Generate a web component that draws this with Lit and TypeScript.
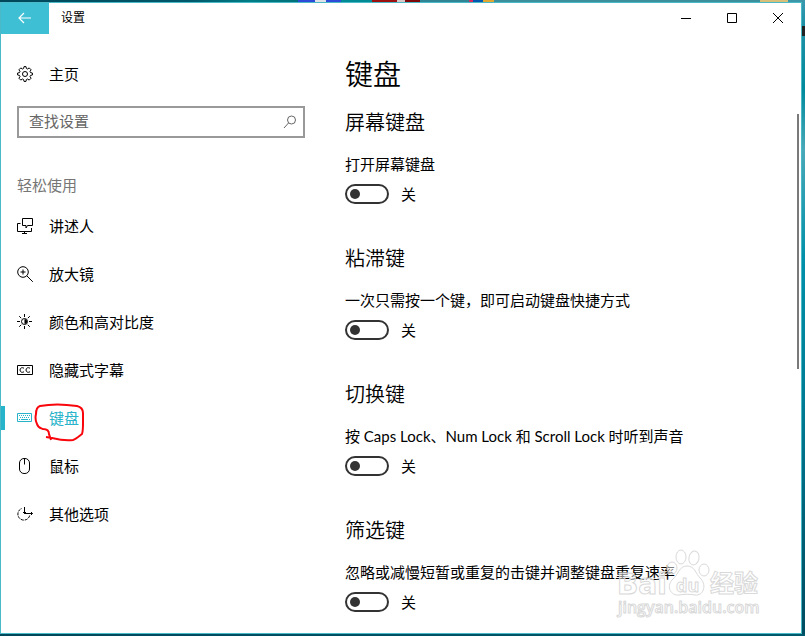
import { LitElement, html, css, svg } from "lit";
import { customElement, property, state } from "lit/decorators.js";
import { classMap } from "lit/directives/class-map.js";

const icons: Record<string, unknown> = {
  gear: svg`<path d="M7 .6h2l.4 1.9 1.2.5L12.200 1.900l1.900 1.900L13 5.400l.5 1.200 1.900.4v2l-1.900.4-.5 1.200 1.100 1.600-1.900 1.900L10.600 13l-1.200.5L9 15.400H7l-.4-1.900L5.400 13l-1.600 1.100-1.900-1.900L3 10.600l-.5-1.200L.6 9V7l1.900-.4L3 5.400 1.900 3.800l1.900-1.900L5.400 3l1.200-.5z"/><circle cx="8" cy="8" r="2.500"/>`,
  narrator: svg`<path d="M5.500 .5h10v7h-5l-1.500 2.500v-2.500H5.500z M3.500 5.500h-3v8h14v-3.500M7.500 13.500v2M5 15.500h5"/>`,
  magnifier: svg`<circle cx="6" cy="6" r="5.300"/><path d="M9.800 9.800l6 6M6 3.500v5M3.500 6h5"/>`,
  contrast: svg`<circle cx="7.500" cy="7.500" r="3"/><path d="M7.500 5a2.500 2.500 0 0 1 0 5z" fill="currentColor" stroke="none"/><path d="M7.500 0v3M7.500 12v3M0 7.500h3M12 7.500h3M2.200 2.200l2 2M10.800 10.800l2 2M2.200 12.800l2-2M10.800 4.200l2-2"/>`,
  captions: svg`<path d="M.5 3.500h15v9H.5z"/><path d="M7 6.200C5 5 3 6 3 8s2 3 4 1.800M13 6.200C11 5 9 6 9 8s2 3 4 1.800"/>`,
  keyboard: svg`<path d="M.5 3.500h14v8H.5z"/><path d="M2 5.500h11M3 7.500h10" stroke-dasharray="1 1"/><path d="M2 9.500h1M4 9.500h7M12 9.500h1"/>`,
  mouse: svg`<rect x="2.500" y=".5" width="10" height="15" rx="4.500"/><path d="M7.500 .5v6"/>`,
  other: svg`<path d="M12.700 9.500A6 6 0 1 1 5 2.400" stroke-dasharray="3 1"/><path d="M7.500 1v6.500H15.500M6 6l1.500 1.500L9 6M14 6l1.500 1.500L14 9"/>`,
};

@customElement("nav-icon")
export class NavIcon extends LitElement {
  @property() name = "";
  static styles = css`
    :host { display: block; flex: none; width: 16px; height: 16px; }
    svg { display: block; fill: none; stroke: currentColor; overflow: visible; }
  `;
  render() {
    return html`<svg width="16" height="16" viewBox="0 0 16 16" aria-hidden="true">${icons[this.name]}</svg>`;
  }
}

@customElement("setting-section")
export class SettingSection extends LitElement {
  @property() heading = "";
  @property() label = "";
  @state() on = false;
  static styles = css`
    :host { display: block; }
    h2 { margin: 0; font-size: 20px; line-height: 28px; font-weight: 350; }
    .label { display: block; margin-top: 17px; line-height: 22px; }
    .row { display: flex; align-items: center; gap: 12px; margin-top: 9px; height: 20px; }
    input {
      appearance: none; display: flex; align-items: center; box-sizing: border-box;
      width: 44px; height: 20px; margin: 0; padding: 0 3px;
      border: 2px solid #333; border-radius: 10px;
    }
    input::before { content: ""; width: 10px; height: 10px; border-radius: 50%; background: #333; }
    input:checked { justify-content: flex-end; background: #3fbfd3; border-color: #3fbfd3; }
    input:checked::before { background: #fff; }
  `;
  render() {
    return html`
      <h2>${this.heading}</h2>
      <label class="label" for="toggle">${this.label}</label>
      <div class="row">
        <input id="toggle" type="checkbox" role="switch" .checked=${this.on}
          @change=${(e: Event) => (this.on = (e.target as HTMLInputElement).checked)} />
        <span>${this.on ? "开" : "关"}</span>
      </div>`;
  }
}

@customElement("app-root")
export class AppRoot extends LitElement {
  @state() current = "keyboard";

  private items = [
    ["narrator", "讲述人"],
    ["magnifier", "放大镜"],
    ["contrast", "颜色和高对比度"],
    ["captions", "隐藏式字幕"],
    ["keyboard", "键盘"],
    ["mouse", "鼠标"],
    ["other", "其他选项"],
  ];

  private sections = [
    ["屏幕键盘", "打开屏幕键盘"],
    ["粘滞键", "一次只需按一个键，即可启动键盘快捷方式"],
    ["切换键", "按 Caps Lock、Num Lock 和 Scroll Lock 时听到声音"],
    ["筛选键", "忽略或减慢短暂或重复的击键并调整键盘重复速率"],
  ];

  static styles = css`
    * { box-sizing: border-box; }
    :host {
      display: flex; min-height: 100vh; padding: 2px 3px 2px 0; box-sizing: border-box;
      color: #000; font: 15px/22px Lato, "Noto Sans CJK SC", sans-serif;
      background:
        linear-gradient(90deg, #00485a, #00586a 190px, #007d86 250px, #007078 298px,
          #2c49d8 298px 315px, #dfe3e8 315px 326px, #2c49d8 326px 341px, #008a94 341px 372px,
          #9c1010 372px 397px, #d8c8c8 397px 405px, #7c0808 405px 420px, #2f8593 420px 469px,
          #d82860 469px 473px, #0058b0 473px 483px, #e0a830 483px 494px, #3b8e9b 494px 760px,
          #d8c078 760px 788px, #3b97a8 788px) top / 100% 2px no-repeat,
        linear-gradient(90deg, #00485a, #005a6c) bottom / 100% 2px no-repeat,
        linear-gradient(#3a9ab0, #1c8fa4 26px, #222 26px 36px, #1c8fa4 36px, #008a9c 90px,
          #4aa8b8 150px, #0090a8 260px, #007c94 400px, #005a70 560px, #004c60);
    }
    .window {
      position: relative; flex: 1; display: flex; flex-direction: column;
      border: 1px solid #4cb9c9; background: #fff;
    }
    .titlebar { display: flex; height: 31px; }
    .titlebar button {
      display: grid; place-items: center; width: 46px; padding: 0 0 1px;
      border: 0; background: none; color: inherit;
    }
    .titlebar .back { width: 48px; background: #3fbfd3; color: #fff; }
    .titlebar svg { fill: none; stroke: currentColor; }
    .title { flex: 1; padding-left: 12px; font-size: 12px; line-height: 30px; }
    .body { flex: 1; display: flex; }
    aside { flex: none; width: 328px; padding: 16px 24px 0 0; }
    .item {
      position: relative; display: flex; align-items: center; gap: 16px; height: 48px;
      padding-left: 16px; color: inherit; text-decoration: none;
    }
    .item.active { color: #27b3ca; }
    .item.active::before {
      content: ""; position: absolute; left: 0; top: 12px; width: 4px; height: 24px; background: #27b3ca;
    }
    .search {
      display: flex; align-items: center; height: 32px; margin: 8px 0 0 16px; padding: 0 6px 0 10px;
      border: 2px solid #999; color: #666;
    }
    .search input {
      flex: 1; min-width: 0; padding: 0 0 2px; border: 0; outline: 0; background: none;
      color: #000; font: inherit;
    }
    .search input::placeholder { color: #666; opacity: 1; }
    .search button { padding: 0; border: 0; background: none; color: inherit; display: flex; }
    .search svg { fill: none; stroke: currentColor; }
    .group { margin: 36px 0 6px 16px; color: #767676; font-size: 15px; line-height: 22px; font-weight: inherit; }
    .mark { position: absolute; left: 33px; top: 9px; fill: none; stroke: #f8060c; stroke-width: 2; }
    main { flex: 1; min-width: 0; padding: 20px 24px 16px 16px; }
    .sections { display: grid; gap: 40px; }
    h1 { margin: 0 0 14px; font-size: 28px; line-height: 40px; font-weight: 350; }
    .thumb { position: absolute; right: 2px; top: 111px; width: 2px; height: 255px; background: #7a7a7a; }
    .watermark {
      position: absolute; right: 39px; bottom: 9px; overflow: visible; fill: #fff; fill-opacity: 0.5;
      stroke: #d9d9d9; pointer-events: none; font-family: "Open Sans", "Noto Sans CJK SC", sans-serif;
    }
    .latin { font: 700 28px "DejaVu Sans", sans-serif; }
    .du { font-size: 18px; font-weight: 700; }
    .hanzi { font-size: 24px; font-weight: 700; }
    .site { font-size: 16px; font-weight: 600; }
  `;

  render() {
    return html`
      <div class="window">
        <header class="titlebar">
          <button class="back" aria-label="返回">
            <svg width="14" height="12" viewBox="0 0 14 12"><path d="M13 6H1M6 1L1 6l5 5" stroke-width="1.200" /></svg>
          </button>
          <span class="title">设置</span>
          <button aria-label="最小化"><svg width="10" height="10"><path d="M0 5.500h10" /></svg></button>
          <button aria-label="最大化"><svg width="10" height="10"><path d="M.5 .5h9v9h-9z" /></svg></button>
          <button aria-label="关闭"><svg width="10" height="10"><path d="M0 0l10 10M10 0L0 10" /></svg></button>
        </header>
        <div class="body">
          <aside>
            <a class="item" href="#home"><nav-icon name="gear"></nav-icon>主页</a>
            <form class="search" @submit=${(e: Event) => e.preventDefault()}>
              <input type="text" placeholder="查找设置" aria-label="查找设置" />
              <button aria-label="搜索">
                <svg width="14" height="14"><circle cx="8.500" cy="5" r="4" /><path d="M5.500 8L1 13" /></svg>
              </button>
            </form>
            <h2 class="group">轻松使用</h2>
            <nav>
              ${this.items.map(([id, text]) => html`
                <a class=${classMap({ item: true, active: id === this.current })} href="#${id}"
                  @click=${() => (this.current = id)}>
                  <nav-icon name=${id}></nav-icon>${text}
                  ${id === "keyboard"
                    ? html`<svg class="mark" width="52" height="42" viewBox="0 0 52 42" aria-hidden="true">
                        <path d="M12 34L18 35C26 37 32 38 39 37C42 36 43 35 48 31C49 28 49 25 49 21L49 10C49 6 47 4 43 3C30 1 16 1 6 3C3 4 2 7 2 11C1 15 2 19 3 21C4 25 6 25 9 26C14 26 15 29 15 31L17 37" />
                      </svg>`
                    : ""}
                </a>`)}
            </nav>
          </aside>
          <main>
            <h1>键盘</h1>
            <div class="sections">
              ${this.sections.map(([h, l]) => html`<setting-section heading=${h} label=${l}></setting-section>`)}
            </div>
          </main>
        </div>
        <div class="thumb"></div>
        <svg class="watermark" width="146" height="76" viewBox="0 0 146 76" aria-hidden="true">
          <ellipse cx="65" cy="9" rx="5" ry="7" /><ellipse cx="78" cy="10" rx="5" ry="7" transform="rotate(12 78 10)" />
          <ellipse cx="56" cy="20" rx="5" ry="6" /><ellipse cx="88" cy="22" rx="5" ry="6" />
          <path d="M71 18c8 0 8 7 14 13 6 7 2 17-6 16-5-1-11-1-16 0-8 1-13-8-7-15 7-6 7-14 15-14z" />
          <text class="latin" x="1" y="46">Bai</text>
          <text class="du" x="60" y="44">du</text>
          <text class="hanzi" x="94" y="44">经验</text>
          <text class="site" x="2" y="65">jingyan.baidu.com</text>
        </svg>
      </div>`;
  }
}
